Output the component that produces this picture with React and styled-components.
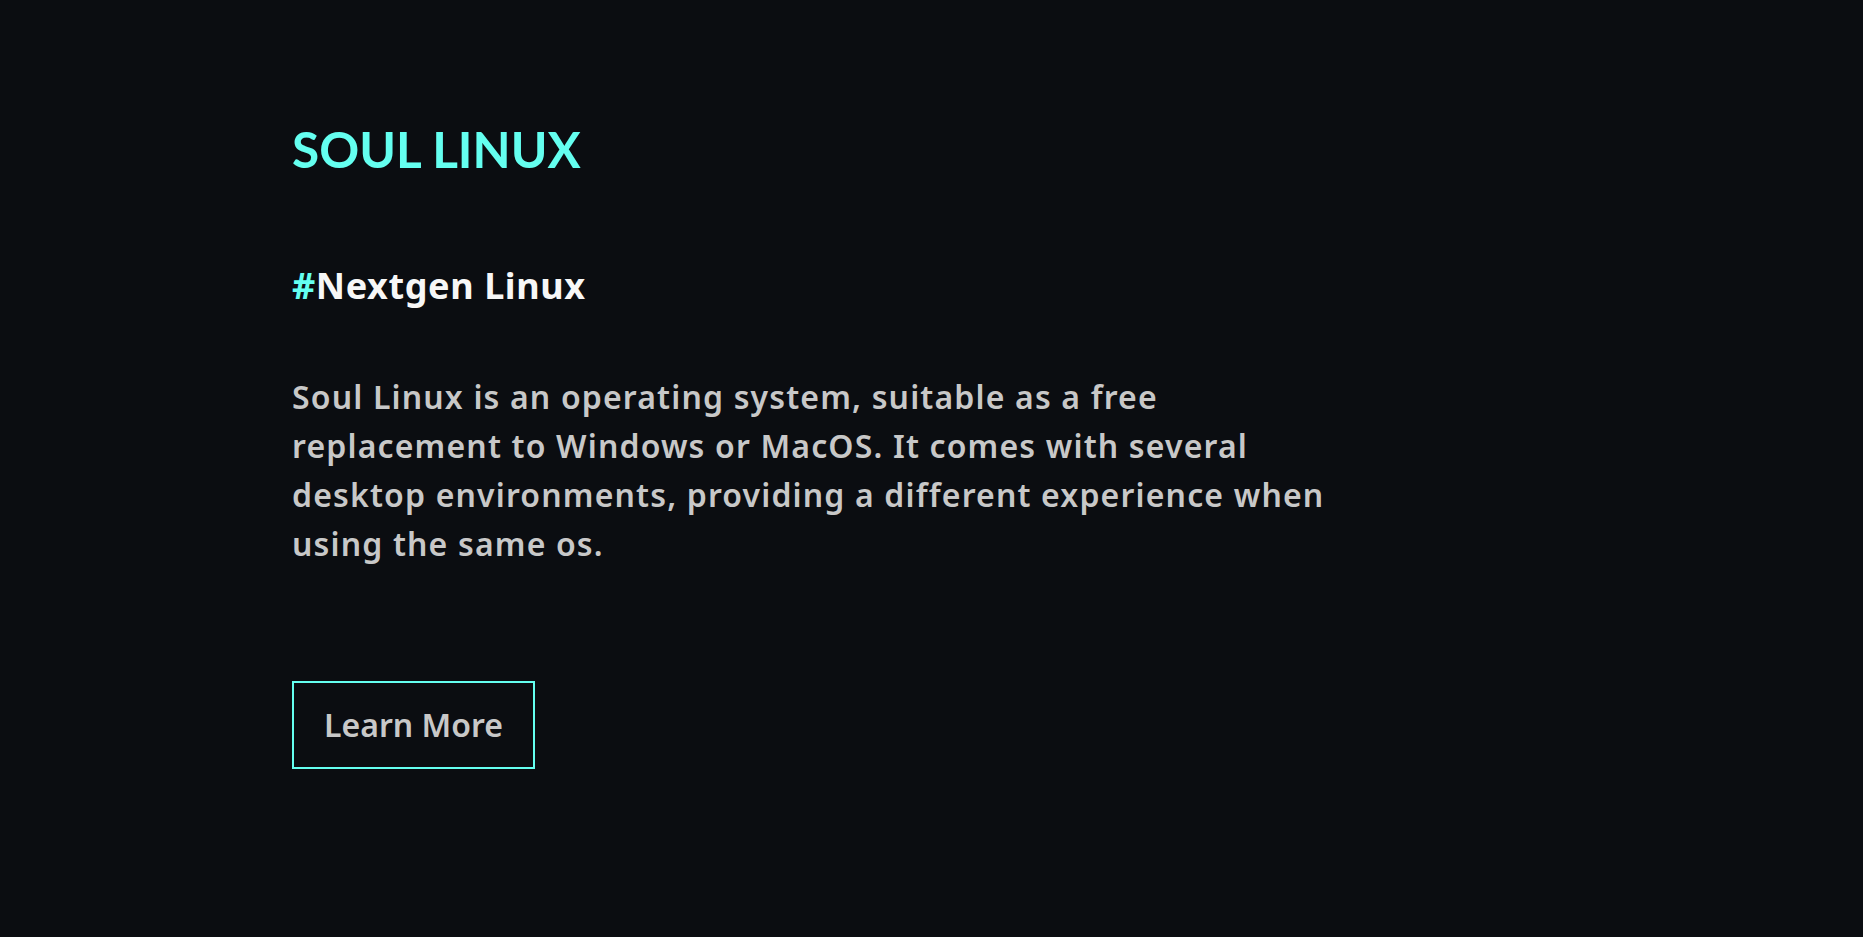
import React from 'react';
import styled, { createGlobalStyle } from 'styled-components';

const GlobalStyle = createGlobalStyle`
  html, body {
    margin: 0;
    padding: 0;
    background-color: #0b0d11;
  }
  body {
    font-family: 'Noto Sans', 'Lato', sans-serif;
  }
`;

const Hero = styled.section`
  min-height: 937px;
  box-sizing: border-box;
  padding: 119px 0 0 292px;
  background-color: #0b0d11;
`;

const Title = styled.h1`
  margin: 0;
  font-family: 'Lato', sans-serif;
  font-size: 49.5px;
  line-height: 60px;
  font-weight: 700;
  color: #64fff0;
`;

const Tagline = styled.h2`
  margin: 85px 0 0;
  font-size: 36px;
  line-height: 44px;
  font-weight: 700;
  letter-spacing: 0.6px;
  color: #f7f7f7;
`;

const Hash = styled.span`
  color: #64fff0;
`;

const Description = styled.p`
  margin: 64px 0 0;
  max-width: 1035px;
  font-size: 32px;
  line-height: 49px;
  font-weight: 600;
  letter-spacing: 1.15px;
  color: #c8c8c8;
`;

const LearnButton = styled.button`
  margin-top: 113px;
  padding: 22px 30px;
  background: transparent;
  border: 2px solid #64fff0;
  font-family: inherit;
  font-size: 32px;
  line-height: 40px;
  font-weight: 600;
  color: #c8c8c8;
  cursor: pointer;
`;

const App = () => {
  return (
    <>
      <GlobalStyle />
      <Hero>
        <Title>SOUL LINUX</Title>
        <Tagline>
          <Hash>#</Hash>Nextgen Linux
        </Tagline>
        <Description>
          Soul Linux is an operating system, suitable as a free replacement to
          Windows or MacOS. It comes with several desktop environments,
          providing a different experience when using the same os.
        </Description>
        <LearnButton>Learn More</LearnButton>
      </Hero>
    </>
  );
};

export default App;
